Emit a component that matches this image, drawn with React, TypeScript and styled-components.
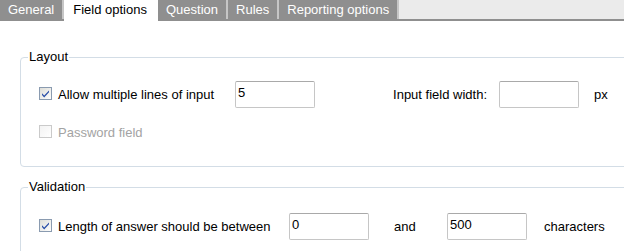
import * as React from 'react';
import styled, { createGlobalStyle } from 'styled-components';

const GlobalStyle = createGlobalStyle`
  html, body {
    margin: 0;
    padding: 0;
    background: #ffffff;
  }

  body {
    font-family: "Liberation Sans", Arial, sans-serif;
    font-size: 13px;
    color: #000000;
  }
`;

const Page = styled.div`
  width: 624px;
  height: 251px;
  overflow: hidden;
  background: #ffffff;
`;

const TabBar = styled.div`
  display: flex;
  height: 19px;
  background: #ebebeb;
  border-bottom: 2px solid #8f8f8f;
`;

const Tab = styled.div<{ $active?: boolean }>`
  height: ${props => props.$active ? '21px' : '19px'};
  line-height: 19px;
  padding: 0 ${props => props.$active ? '9px' : '8px'};
  background: ${props => props.$active ? '#ffffff' : '#8f8f8f'};
  color: ${props => props.$active ? '#000000' : '#ffffff'};
  border-right: 2px solid ${props => props.$active ? '#ffffff' : '#c6c6c6'};
  white-space: nowrap;
`;

const Body = styled.div`
  display: flex;
  flex-direction: column;
  gap: 12px;
  padding-top: 28px;
`;

const Group = styled.fieldset<{ $top: number }>`
  margin: 0 -40px 0 20px;
  padding: ${props => props.$top}px 0 20px 18px;
  border: 1px solid #d3dde6;
  border-radius: 4px;
  min-width: 0;
`;

const Legend = styled.legend`
  margin-left: -11px;
  padding: 0 1px;
  line-height: 16px;
  color: #000000;
`;

const Rows = styled.div`
  display: flex;
  flex-direction: column;
  gap: 11px;
`;

const Row = styled.div`
  display: flex;
  align-items: center;
  height: 27px;
`;

const CheckLabel = styled.label<{ $width: number; $disabled?: boolean }>`
  display: flex;
  align-items: center;
  gap: 6px;
  width: ${props => props.$width}px;
  flex: none;
  line-height: 16px;
  color: ${props => props.$disabled ? '#a3a3a3' : '#000000'};
  white-space: nowrap;
`;

const Box = styled.svg`
  flex: none;
  margin-top: -2px;
`;

const Input = styled.input<{ $before?: number }>`
  box-sizing: border-box;
  width: 80px;
  height: 27px;
  flex: none;
  margin: 0 0 0 ${props => props.$before || 0}px;
  padding: 3px 2px 8px;
  border: 1px solid #c6c6c6;
  border-top-color: #a9a9a9;
  border-radius: 2px;
  font-family: "Liberation Sans", Arial, sans-serif;
  font-size: 13px;
  line-height: 14px;
  color: #000000;
  background: #ffffff;
  outline: none;
`;

const Caption = styled.span<{ $width?: number; $align?: string; $before?: number }>`
  flex: none;
  box-sizing: border-box;
  width: ${props => props.$width ? `${props.$width}px` : 'auto'};
  padding-left: ${props => props.$before || 0}px;
  text-align: ${props => props.$align || 'left'};
  line-height: 16px;
  white-space: nowrap;
`;

const CheckBox = ({ checked, disabled }: { checked?: boolean; disabled?: boolean }) => (
  <Box width="13" height="13" viewBox="0 0 13 13">
    <defs>
      <linearGradient id={disabled ? 'cbOff' : 'cbOn'} x1="0" y1="0" x2="1" y2="1">
        <stop offset="0" stopColor={disabled ? '#f2f2f2' : '#dcdcd6'} />
        <stop offset="1" stopColor="#ffffff" />
      </linearGradient>
    </defs>
    <rect
      x="0.5"
      y="0.5"
      width="12"
      height="12"
      fill={`url(#${disabled ? 'cbOff' : 'cbOn'})`}
      stroke={disabled ? '#cacaca' : '#8a9bb0'}
    />
    {checked && (
      <path
        d="M3 6.2 L5.2 8.6 L10 3.4 L10 5.2 L5.2 10.4 L3 8 Z"
        fill="#2a4fa8"
      />
    )}
  </Box>
);

const App = () => {
  const tabs = ['General', 'Field options', 'Question', 'Rules', 'Reporting options'];

  return (
    <Page>
      <GlobalStyle />
      <TabBar>
        {tabs.map(name => (
          <Tab key={name} $active={name === 'Field options'}>{name}</Tab>
        ))}
      </TabBar>
      <Body>
        <Group $top={16}>
          <Legend>Layout</Legend>
          <Rows>
            <Row>
              <CheckLabel $width={196}>
                <CheckBox checked />
                Allow multiple lines of input
              </CheckLabel>
              <Input defaultValue="5" />
              <Caption $width={172} $align="right">Input field width:</Caption>
              <Input $before={12} defaultValue="" />
              <Caption $before={15}>px</Caption>
            </Row>
            <Row>
              <CheckLabel $width={196} $disabled>
                <CheckBox disabled />
                Password field
              </CheckLabel>
            </Row>
          </Rows>
        </Group>
        <Group $top={18}>
          <Legend>Validation</Legend>
          <Rows>
            <Row>
              <CheckLabel $width={250}>
                <CheckBox checked />
                Length of answer should be between
              </CheckLabel>
              <Input defaultValue="0" />
              <Caption $width={78} $before={25}>and</Caption>
              <Input defaultValue="500" />
              <Caption $before={17}>characters</Caption>
            </Row>
          </Rows>
        </Group>
      </Body>
    </Page>
  );
};

export default App;
